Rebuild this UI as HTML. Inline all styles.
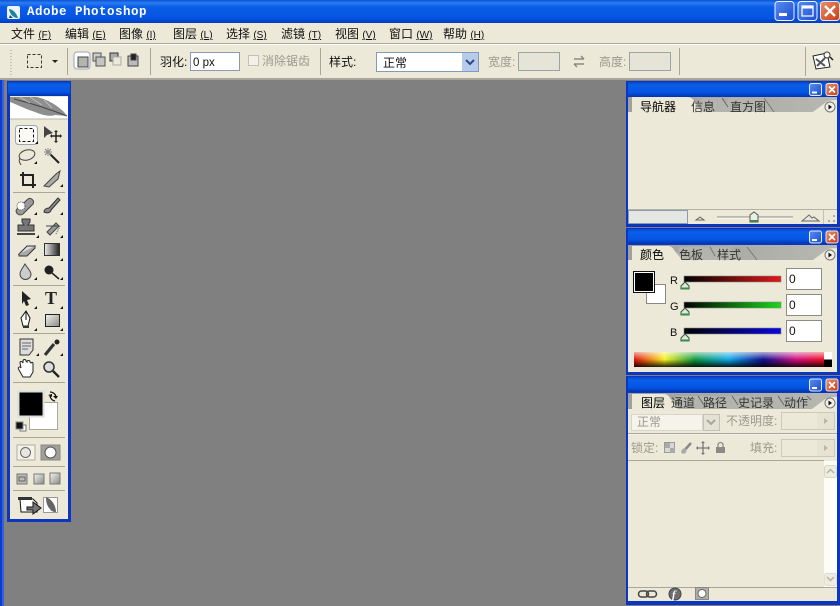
<!DOCTYPE html>
<html><head><meta charset="utf-8">
<style>
html,body{margin:0;padding:0;background:#808080;width:840px;height:606px;overflow:hidden}
svg{display:block;filter:blur(.3px)}
text{font-family:"Liberation Sans","WenQuanYi Zen Hei","Noto Sans CJK SC",sans-serif;font-size:12px;fill:#111}
.g{fill:#9c9a8e}
.t{fill:#333}
</style></head><body>
<svg width="840" height="606" viewBox="0 0 840 606" xmlns="http://www.w3.org/2000/svg">
<defs>
<linearGradient id="tb" x1="0" y1="0" x2="0" y2="1"><stop offset="0" stop-color="#0a50d8"/><stop offset=".12" stop-color="#2a7cf0"/><stop offset=".3" stop-color="#0a5ce6"/><stop offset=".75" stop-color="#0554e2"/><stop offset="1" stop-color="#0038b8"/></linearGradient>
<linearGradient id="pt" x1="0" y1="0" x2="0" y2="1"><stop offset="0" stop-color="#0a46cc"/><stop offset=".2" stop-color="#0a5ee8"/><stop offset=".7" stop-color="#0554e2"/><stop offset="1" stop-color="#0034b0"/></linearGradient>
<linearGradient id="btn" x1="0" y1="0" x2="1" y2="1"><stop offset="0" stop-color="#5a8cf0"/><stop offset="1" stop-color="#1c4cd0"/></linearGradient>
<linearGradient id="cls" x1="0" y1="0" x2="1" y2="1"><stop offset="0" stop-color="#e8906c"/><stop offset="1" stop-color="#c83c14"/></linearGradient>
<linearGradient id="r" x1="0" y1="0" x2="1" y2="0"><stop offset="0" stop-color="#000"/><stop offset="1" stop-color="#e01818"/></linearGradient>
<linearGradient id="gr" x1="0" y1="0" x2="1" y2="0"><stop offset="0" stop-color="#000"/><stop offset="1" stop-color="#18d818"/></linearGradient>
<linearGradient id="b" x1="0" y1="0" x2="1" y2="0"><stop offset="0" stop-color="#000"/><stop offset="1" stop-color="#0808e0"/></linearGradient>
<linearGradient id="sp" x1="0" y1="0" x2="1" y2="0"><stop offset="0" stop-color="#e01010"/><stop offset=".16" stop-color="#f8f020"/><stop offset=".32" stop-color="#109a40"/><stop offset=".5" stop-color="#10a8e8"/><stop offset=".68" stop-color="#101090"/><stop offset=".85" stop-color="#d01080"/><stop offset="1" stop-color="#f01020"/></linearGradient>
<linearGradient id="sh" x1="0" y1="0" x2="0" y2="1"><stop offset="0" stop-color="#fff" stop-opacity=".65"/><stop offset=".5" stop-color="#fff" stop-opacity="0"/><stop offset=".5" stop-color="#000" stop-opacity="0"/><stop offset="1" stop-color="#000" stop-opacity=".85"/></linearGradient>
<linearGradient id="mg" x1="0" y1="0" x2="1" y2="0"><stop offset="0" stop-color="#eee"/><stop offset="1" stop-color="#222"/></linearGradient>
<linearGradient id="gb" x1="0" y1="0" x2="1" y2="1"><stop offset="0" stop-color="#f4f4f0"/><stop offset="1" stop-color="#8a8a84"/></linearGradient>
<linearGradient id="strip" x1="0" y1="0" x2="1" y2="0"><stop offset="0" stop-color="#a0a09c"/><stop offset="1" stop-color="#b8b8b2"/></linearGradient>
<path id="c" d="M0 0h3v-3z" fill="#111"/>
<g id="min"><rect x="0" y="0" width="12" height="12" rx="2" fill="url(#btn)" stroke="#e4ecff"/><rect x="2.5" y="8" width="5" height="2" fill="#fff"/></g>
<g id="cl"><rect x="0" y="0" width="12" height="12" rx="2" fill="url(#cls)" stroke="#f4e4dc"/><path d="M3 3l6 6M9 3l-6 6" stroke="#fff" stroke-width="1.7"/></g>
<g id="mn"><circle cx="0" cy="0" r="5" fill="#f2f0e6" stroke="#777"/><path d="M-1.5 -2.5l3.5 2.5-3.5 2.5z" fill="#111"/></g>
<g id="th"><path d="M0 0l4 4v3h-8v-3z" fill="#dfe8d8" stroke="#2a5a3a"/><rect x="-4" y="5.5" width="8" height="2" fill="#3a8a50"/></g>
</defs>

<rect width="840" height="606" fill="#808080"/>
<rect x="0" y="78" width="3" height="528" fill="#0a3ed0"/>
<rect x="2" y="78" width="2" height="528" fill="#3a60d8"/>

<!-- Title bar -->
<rect width="840" height="24" fill="url(#tb)"/>
<rect x="7" y="6" width="13" height="13" rx="2" fill="#eaf4fa"/>
<path d="M9 9c3 0 7 3 9 9-4 0-8-3-9-9z" fill="#1f7fa0"/>
<path d="M10 15l3 3H9z" fill="#0a4a80"/>
<text x="27" y="15" style="font:bold 12.5px 'Liberation Mono',monospace;fill:#fff;letter-spacing:.5px">Adobe Photoshop</text>
<rect x="775" y="1.5" width="19" height="19" rx="3" fill="url(#btn)" stroke="#f0f4ff"/>
<rect x="779" y="13" width="8" height="3" fill="#fff"/>
<rect x="798" y="1.5" width="19" height="19" rx="3" fill="url(#btn)" stroke="#f0f4ff"/>
<rect x="802" y="6" width="11" height="10" fill="none" stroke="#fff" stroke-width="1.2"/><rect x="802" y="6" width="11" height="2.5" fill="#fff"/>
<rect x="820.500" y="1.5" width="19" height="19" rx="3" fill="url(#cls)" stroke="#f4e4dc"/>
<path d="M825 6l10 10M835 6l-10 10" stroke="#fff" stroke-width="2.3"/>

<!-- Menu -->
<rect y="23" width="840" height="21" fill="#ece9d8"/>
<g>
<text x="11" y="38">文件 <tspan font-size="10" text-decoration="underline">(F)</tspan></text>
<text x="65" y="38">编辑 <tspan font-size="10" text-decoration="underline">(E)</tspan></text>
<text x="119" y="38">图像 <tspan font-size="10" text-decoration="underline">(I)</tspan></text>
<text x="173" y="38">图层 <tspan font-size="10" text-decoration="underline">(L)</tspan></text>
<text x="226" y="38">选择 <tspan font-size="10" text-decoration="underline">(S)</tspan></text>
<text x="281" y="38">滤镜 <tspan font-size="10" text-decoration="underline">(T)</tspan></text>
<text x="335" y="38">视图 <tspan font-size="10" text-decoration="underline">(V)</tspan></text>
<text x="389" y="38">窗口 <tspan font-size="10" text-decoration="underline">(W)</tspan></text>
<text x="443" y="38">帮助 <tspan font-size="10" text-decoration="underline">(H)</tspan></text>
</g>
<rect y="43" width="840" height="1" fill="#aca899"/><rect y="44" width="840" height="1" fill="#fff"/>

<!-- Options bar -->
<rect y="45" width="840" height="33" fill="#ece9d8"/>
<rect y="78" width="840" height="2" fill="#a8a69c"/>
<path d="M11 50v27" stroke="#9a9a8c" stroke-dasharray="1 2" stroke-width="1"/>
<rect x="27.500" y="54.500" width="14" height="13" fill="none" stroke="#333" stroke-dasharray="3 2"/>
<path d="M52 60h6l-3 3z" fill="#222"/>
<path d="M67.500 48v27M150.500 48v27M320.500 48v27M679.500 48v27M805.500 47v29" stroke="#aaa79a"/>
<rect x="74" y="52" width="16" height="17" rx="3" fill="#fff" stroke="#9aa4b8"/>
<rect x="78" y="57" width="10" height="10" fill="#b4b4ae" stroke="#444"/>
<rect x="93" y="53" width="8" height="8" fill="#ccc" stroke="#555"/><rect x="96" y="57" width="9" height="9" fill="#c4c4c0" stroke="#555"/>
<rect x="110" y="53" width="8" height="8" fill="#aaa" stroke="#333"/><rect x="113" y="57" width="8" height="8" fill="#ece9d8" stroke="#aaa"/>
<rect x="128" y="56" width="10" height="10" fill="#bbb" stroke="#444"/><rect x="131" y="54" width="5" height="6" fill="#222" stroke="#444"/>
<text x="160" y="66">羽化:</text>
<rect x="190.500" y="52.500" width="49" height="18" fill="#fff" stroke="#8a9ab0"/>
<text x="193" y="66" style="font-size:11.500px">0 px</text>
<rect x="248.500" y="55.500" width="10" height="10" fill="#f4f2e8" stroke="#c4c2b8"/>
<text class="g" x="262" y="65">消除锯齿</text>
<text x="329" y="66">样式:</text>
<rect x="376.500" y="52.500" width="102" height="19" fill="#fff" stroke="#7f9db9"/>
<text x="383" y="67">正常</text>
<rect x="462" y="53" width="16" height="18" fill="#b8cbec"/>
<path d="M466 60l4 4 4-4" fill="none" stroke="#2a4a80" stroke-width="2"/>
<text class="g" x="488" y="66">宽度:</text>
<rect x="518.500" y="52.500" width="41" height="18" fill="#e6e4d6" stroke="#9aa4a4"/>
<path d="M574 59h10M581 56l3 3M584 64h-10M577 67l-3-3" stroke="#8c8a80" stroke-width="1.500" fill="none"/>
<text class="g" x="599" y="66">高度:</text>
<rect x="629.500" y="52.500" width="41" height="18" fill="#e6e4d6" stroke="#9aa4a4"/>
<path d="M813 56l14-3 3 14-14 2z" fill="#fff" stroke="#222"/>
<path d="M816 59l9 7M825 58l-8 8" stroke="#555" stroke-width="2"/>
<circle cx="827" cy="55" r="3" fill="#fff" stroke="#333"/><path d="M830 57l3 3" stroke="#222" stroke-width="1.500"/>

<!-- Toolbox -->
<rect x="7" y="81" width="64" height="441" fill="#0c36c0"/>
<rect x="8" y="82" width="62" height="14" fill="url(#pt)"/>
<rect x="10" y="96" width="58" height="423" fill="#ece9d8"/>
<rect x="10" y="97" width="58" height="22" fill="#fff"/>
<path d="M10 97h26c8 1 20 7 28 15l3 4-12-1c-5 2-13 0-20-3-10-3-19-8-25-10z" fill="#8e8e8e"/>
<path d="M14 99c12 3 30 8 53 17" stroke="#444" fill="none"/>
<path d="M20 97l10 6M30 97l12 8M44 100l8 8" stroke="#bdbdbd"/>
<path d="M10 119h58" stroke="#b8b6a8"/>
<rect x="15.500" y="125.500" width="22" height="19" rx="3" fill="#fbfaf4" stroke="#9aa4b8"/>
<rect x="19.500" y="128.500" width="14" height="13" fill="none" stroke="#111" stroke-dasharray="3 2"/>
<use href="#c" x="35" y="144"/>
<path d="M44 126l9 7-6 2-3 3z" fill="#444"/><path d="M56 131v11M51 136h10" stroke="#222" stroke-width="1.500"/><path d="M56 130l-2 2h4zM56 143l-2-2h4zM50 136l2-2v4zM62 136l-2-2v4z" fill="#222"/>
<ellipse cx="27" cy="155" rx="8" ry="5" fill="none" stroke="#444" transform="rotate(-15 27 155)"/><path d="M20 158c-2 3 0 5 1 7" stroke="#444" fill="none"/>
<use href="#c" x="34" y="164"/>
<path d="M50 154l9 9" stroke="#222" stroke-width="2"/><path d="M48 148v8M44 152h8M45 149l6 6M51 149l-6 6" stroke="#888"/>
<path d="M23 172v13h13M20 175h13v13" fill="none" stroke="#222" stroke-width="2"/>
<path d="M44 186l12-12 4-3-2 8-9 8z" fill="#aaa" stroke="#444"/><use href="#c" x="60" y="187"/>
<path d="M13 192.500h52" stroke="#aaa79a"/>
<path d="M17 209l11-10c3-2 7 2 5 5l-10 10c-4 3-9-2-6-5z" fill="#999" stroke="#444"/><circle cx="21" cy="206" r="4" fill="#fff" stroke="#555" stroke-dasharray="1 1"/>
<use href="#c" x="34" y="215"/>
<path d="M44 212c0-3 3-4 5-4l9-10 2 2-9 10c0 2-3 4-7 2z" fill="#888" stroke="#333"/><use href="#c" x="60" y="215"/>
<path d="M22 219h8v3l-2 3h6v6h-16v-6h6l-2-3z" fill="#777" stroke="#333"/><rect x="17" y="233" width="18" height="2" fill="#444"/><use href="#c" x="36" y="238"/>
<path d="M46 226h12M47 232l9-9 3 3-9 9z" fill="#999" stroke="#444"/><path d="M56 234l4-8" stroke="#555" stroke-dasharray="1 1"/><use href="#c" x="60" y="238"/>
<path d="M19 254l8-8h8l-8 8z" fill="#ddd" stroke="#333"/><path d="M19 254v2h8l8-8v-2" fill="#aaa" stroke="#333"/><use href="#c" x="34" y="261"/>
<rect x="44.500" y="243.500" width="15" height="12" fill="url(#mg)" stroke="#333"/><use href="#c" x="60" y="261"/>
<path d="M25 264c-3 5-5 7-5 10a5 5 0 0 0 11 0c0-3-3-5-6-10z" fill="#ccc" stroke="#444"/><use href="#c" x="34" y="280"/>
<circle cx="49" cy="270" r="4.500" fill="#222"/><path d="M52 273l7 6" stroke="#222" stroke-width="1.500"/><use href="#c" x="60" y="280"/>
<path d="M13 285.500h52" stroke="#aaa79a"/>
<path d="M22 291l9 8-4 1 2 5-3 1-2-5-2 3z" fill="#222"/><use href="#c" x="34" y="309"/>
<text x="45" y="304" style="font:bold 18px 'Liberation Serif',serif;fill:#222">T</text><use href="#c" x="60" y="309"/>
<path d="M26 311l4 7-2 8h-5l-2-8z" fill="#fff" stroke="#111"/><path d="M26 311v9" stroke="#111"/><rect x="23" y="326" width="6" height="2" fill="#333"/><use href="#c" x="34" y="331"/>
<rect x="45.500" y="314.500" width="14" height="12" fill="url(#gb)" stroke="#222"/><use href="#c" x="60" y="331"/>
<path d="M13 333.500h52" stroke="#aaa79a"/>
<path d="M20 339h13v11l-4 5h-9z" fill="#ddd" stroke="#333"/><path d="M22 343h9M22 346h9M22 349h6" stroke="#666"/><use href="#c" x="36" y="356"/>
<path d="M45 355l9-11" stroke="#333" stroke-width="3"/><circle cx="57" cy="342" r="2.500" fill="#222"/><use href="#c" x="60" y="356"/>
<path d="M19 370c-2-3 1-4 2-2l-1-5c0-2 2-2 3 0l0-2c0-2 3-2 3 0l1 1c0-2 3-2 3 0l1 1c1-1 2-1 2 1v8l-3 5h-7z" fill="#fff" stroke="#222"/>
<circle cx="49" cy="367" r="5" fill="#ddd" stroke="#333" stroke-width="1.500"/><path d="M53 371l6 6" stroke="#222" stroke-width="2.300"/>
<path d="M13 382.500h52" stroke="#aaa79a"/>
<rect x="29.500" y="402.500" width="28" height="27" fill="#fff" stroke="#aaa79a"/>
<rect x="18.500" y="391.500" width="25" height="25" fill="#000" stroke="#ddd" stroke-width="2"/>
<path d="M50 392a6 6 0 0 1 6 5M55 401a6 6 0 0 1-5-5" fill="none" stroke="#111" stroke-width="1.300"/><path d="M53 396h5l-2 3zM48 395l4-1v3z" fill="#111"/>
<rect x="20" y="425" width="6" height="6" fill="#fff" stroke="#777"/><rect x="16" y="422" width="7" height="7" fill="#111" stroke="#888"/>
<path d="M13 437.500h52" stroke="#aaa79a"/>
<rect x="17" y="445" width="18" height="15" fill="#f4f2ea" stroke="#b0aea0"/><circle cx="25.500" cy="452.500" r="5" fill="#e8e6de" stroke="#666"/>
<rect x="41" y="445" width="19" height="15" fill="#a2a098" stroke="#888"/><circle cx="50.500" cy="452.500" r="5.500" fill="#fff" stroke="#555"/>
<path d="M13 466.500h52" stroke="#aaa79a"/>
<rect x="17" y="474" width="10" height="10" fill="#bdbbb0" stroke="#777"/><rect x="19" y="477" width="6" height="4" fill="none" stroke="#666"/>
<rect x="34" y="474" width="10" height="10" fill="url(#gb)" stroke="#777"/>
<rect x="50" y="473" width="10" height="11" fill="url(#gb)" stroke="#777"/>
<path d="M13 490.500h52" stroke="#aaa79a"/>
<path d="M20 499h13l4 4v9H21z" fill="#fff" stroke="#111"/><rect x="18" y="497" width="14" height="3" fill="#333"/>
<path d="M27 507h6v-5l8 6-8 6v-4h-6z" fill="#777" stroke="#111"/>
<rect x="43.500" y="497.500" width="14" height="15" fill="#fff" stroke="#999"/>
<path d="M46 497c6 2 10 9 10 15-3 0-5-1-6-3-3-3-4-7-4-12z" fill="#666"/>

<!-- Navigator -->
<rect x="626" y="81" width="214" height="146" fill="#0c36c0"/>
<rect x="628" y="82" width="209" height="15" fill="url(#pt)"/>
<use href="#min" x="809.500" y="83.500"/><use href="#cl" x="826" y="83.500"/>
<rect x="628" y="97" width="209" height="127" fill="#ece9d8"/>
<rect x="628" y="97" width="209" height="15" fill="url(#strip)"/>
<path d="M813 112l12-9q3-3 12-3v12z" fill="#ece9d8"/>
<path d="M692 112l10-14h19l5 6 3-6h35l10 14z" fill="#b4b4ae"/>
<path d="M764 98l10 14" stroke="#777"/><path d="M722 98l6 9" stroke="#666"/>
<path d="M632 112v-15h56q4 0 7 5l8 10z" fill="#ece9d8"/>
<text x="640" y="111" style="fill:#000">导航器</text>
<text class="t" x="691" y="111">信息</text>
<text class="t" x="730" y="111">直方图</text>
<use href="#mn" x="830" y="107"/>
<rect x="628" y="209" width="209" height="15" fill="#ece9d8"/><path d="M628 209.500h209" stroke="#b4b2a4"/>
<rect x="628.500" y="210.500" width="59" height="13" fill="#e4e6e2" stroke="#8c9cb0"/>
<path d="M696 220l4-3 4 3z" fill="#e8e8e0" stroke="#666"/>
<path d="M717 217h76" stroke="#888"/><path d="M717 218h76" stroke="#fff"/>
<path d="M754 212l4 3v7h-8v-7z" fill="#e8efe4" stroke="#555"/><rect x="750" y="220" width="8" height="2" fill="#3a8a50"/>
<path d="M802 221l7-6 3 3 2-1 5 4z" fill="#e8e8e0" stroke="#666"/>
<path d="M823.500 210v14" stroke="#c4c2b4"/>
<path d="M828 221h2M833 221h2M833 216h2" stroke="#aaa" stroke-width="2"/>

<!-- Color panel -->
<rect x="626" y="228" width="214" height="147" fill="#0c36c0"/>
<rect x="628" y="229" width="209" height="15" fill="url(#pt)"/>
<use href="#min" x="809.500" y="231"/><use href="#cl" x="826" y="231"/>
<rect x="628" y="245" width="209" height="127" fill="#ece9d8"/>
<rect x="628" y="245" width="209" height="15" fill="url(#strip)"/>
<path d="M813 260l12-9q3-3 12-3v12z" fill="#ece9d8"/>
<path d="M674 260l6-13h50l8 13z" fill="#b4b4ae"/>
<path d="M710 247l5 9M747 247l10 13" stroke="#777"/>
<path d="M632 260v-14h36q4 0 6 4l8 10z" fill="#ece9d8"/>
<text x="640" y="259" style="fill:#000">颜色</text>
<text class="t" x="679" y="259">色板</text>
<text class="t" x="717" y="259">样式</text>
<use href="#mn" x="830" y="255"/>
<rect x="646.500" y="284.500" width="19" height="19" fill="#fff" stroke="#8c8a80"/>
<rect x="634.500" y="272.500" width="19" height="19" fill="#000" stroke="#fff"/>
<rect x="633.500" y="271.500" width="21" height="21" fill="none" stroke="#111"/>
<text x="670" y="284" style="font-size:11px">R</text>
<text x="670" y="310" style="font-size:11px">G</text>
<text x="670" y="336" style="font-size:11px">B</text>
<rect x="684" y="276" width="97" height="6" fill="url(#r)" stroke="#888" stroke-width=".6"/>
<rect x="684" y="302" width="97" height="6" fill="url(#gr)" stroke="#888" stroke-width=".6"/>
<rect x="684" y="328" width="97" height="6" fill="url(#b)" stroke="#888" stroke-width=".6"/>
<use href="#th" x="685" y="282"/><use href="#th" x="685" y="308"/><use href="#th" x="685" y="334"/>
<rect x="786.500" y="268.500" width="35" height="21" fill="#fff" stroke="#8c8c84"/>
<rect x="786.500" y="294.500" width="35" height="21" fill="#fff" stroke="#8c8c84"/>
<rect x="786.500" y="320.500" width="35" height="21" fill="#fff" stroke="#8c8c84"/>
<text x="789" y="283" style="font-size:12px">0</text>
<text x="789" y="309" style="font-size:12px">0</text>
<text x="789" y="335" style="font-size:12px">0</text>
<rect x="634" y="352" width="190" height="15" fill="url(#sp)"/>
<rect x="634" y="352" width="190" height="15" fill="url(#sh)"/>
<rect x="824" y="352" width="8" height="7.500" fill="#fff"/>
<rect x="824" y="359.500" width="8" height="7.500" fill="#000"/>

<!-- Layers panel -->
<rect x="626" y="376" width="214" height="229" fill="#0c36c0"/>
<rect x="628" y="377" width="209" height="15" fill="url(#pt)"/>
<use href="#min" x="809.500" y="379"/><use href="#cl" x="826" y="379"/>
<rect x="628" y="393" width="209" height="208" fill="#ece9d8"/>
<rect x="628" y="393" width="209" height="16" fill="url(#strip)"/>
<path d="M812 409l12-9q3-3 13-3v12z" fill="#ece9d8"/>
<path d="M670 409l6-13h128l8 13z" fill="#b4b4ae"/>
<path d="M698 396l6 9M732 396l6 9M778 396l6 9M811 400l-4-4" stroke="#666"/>
<path d="M632 409v-15h32q4 0 6 4l8 11z" fill="#ece9d8"/>
<text x="641" y="407" style="fill:#000">图层</text>
<text class="t" x="671" y="407">通道</text>
<text class="t" x="703" y="407">路径</text>
<text class="t" x="738" y="407">史记录</text>
<text class="t" x="784" y="407">动作</text>
<use href="#mn" x="830" y="403"/>
<rect x="631.500" y="414.500" width="71" height="16" fill="#f6f4ea" stroke="#d8d6c8"/>
<text class="g" x="637" y="426">正常</text>
<rect x="703.500" y="414.500" width="16" height="16" fill="#e4e2d4" stroke="#c4c2b4"/>
<path d="M707 420l4 4 4-4" fill="none" stroke="#a8a69c" stroke-width="2"/>
<text class="g" x="726" y="425">不透明度:</text>
<rect x="781.500" y="412.500" width="53" height="17" fill="#ece9d8" stroke="#ccc9b8"/><rect x="817" y="413" width="17" height="16" fill="#e6e3d2"/>
<path d="M824 418l4 3-4 3z" fill="#b8b6a8"/>
<path d="M628 433.500h209M628 460.500h196" stroke="#aaa79a"/><path d="M628 434.500h209" stroke="#fff" opacity=".5"/>
<text class="g" x="631" y="452">锁定:</text>
<rect x="664.500" y="442.500" width="10" height="10" fill="#d8d8d0" stroke="#999"/><path d="M665 443h5v5h5v5h-5v-5h-5z" fill="#aaa"/>
<path d="M682 453l9-10" stroke="#888" stroke-width="2.500"/><circle cx="684" cy="451" r="2.500" fill="#aaa"/>
<path d="M703 442v12M697 448h12" stroke="#777" stroke-width="1.300"/><path d="M703 441l-2 2h4zM703 455l-2-2h4zM696 448l2-2v4zM710 448l-2-2v4z" fill="#777"/>
<rect x="716" y="447" width="9" height="6" fill="#8c8a82"/><path d="M718 447v-2a2.500 2.500 0 0 1 5 0v2" fill="none" stroke="#8c8a82" stroke-width="1.300"/>
<text class="g" x="750" y="452">填充:</text>
<rect x="781.500" y="439.500" width="53" height="17" fill="#ece9d8" stroke="#ccc9b8"/><rect x="817" y="440" width="17" height="16" fill="#e6e3d2"/>
<path d="M824 445l4 3-4 3z" fill="#b8b6a8"/>
<rect x="824" y="461" width="13" height="126" fill="#fdfdf8"/>
<rect x="824.500" y="465.500" width="12" height="12" rx="2" fill="#eeecdf" stroke="#d8d6c8"/><path d="M827 473l3.500-3.500 3.500 3.500" fill="none" stroke="#b4b2a6" stroke-width="1.500"/>
<rect x="824.500" y="573.500" width="12" height="12" rx="2" fill="#eeecdf" stroke="#e4d8dc"/><path d="M827 577l3.500 3.500 3.500-3.500" fill="none" stroke="#b4b2a6" stroke-width="1.500"/>
<path d="M628 587.500h209" stroke="#a8a69a"/>
<rect x="638.500" y="591" width="10" height="6" rx="3" fill="none" stroke="#444" stroke-width="1.500"/><rect x="646.500" y="591" width="10" height="6" rx="3" fill="none" stroke="#444" stroke-width="1.500"/>
<circle cx="675" cy="594" r="6" fill="#6e6e6e" stroke="#444"/>
<text x="672" y="598" style="font:italic bold 11px 'Liberation Serif',serif;fill:#fff">f</text>
<rect x="695.500" y="587.500" width="13" height="12" fill="#b0aea4" stroke="#888"/><circle cx="702" cy="593.500" r="4" fill="#fff" stroke="#666"/>
</svg>
</body></html>
